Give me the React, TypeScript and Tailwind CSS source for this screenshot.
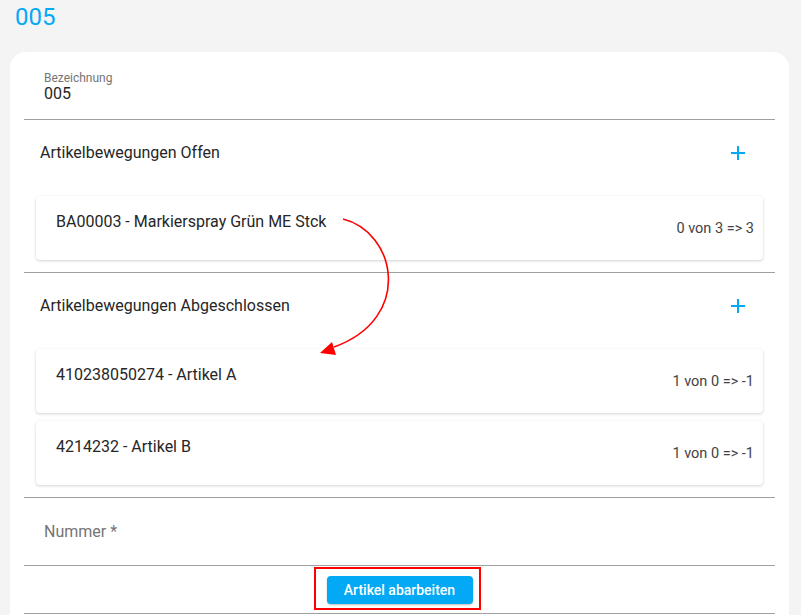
import React from "react";

const Plus = () => (
  <svg width="14" height="14" viewBox="0 0 14 14" className="block">
    <path d="M7 0V14M0 7H14" stroke="#03a9f4" strokeWidth="2" />
  </svg>
);

const Item = ({ title, qty }: { title: string; qty: string }) => (
  <div className="h-[64px] bg-white rounded-[4px] shadow-[0_1px_3px_rgba(0,0,0,0.18)] flex justify-between pl-[20px] pr-[9px]">
    <div className="pt-[16px] text-[16px] leading-[20px] text-[#262626]">{title}</div>
    <div className="self-center pt-[1px] text-[14.5px] leading-[20px] text-[#424242]">{qty}</div>
  </div>
);

const Section = ({ title, children }: { title: string; children: React.ReactNode }) => (
  <div className="border-b border-[#a0a0a0]">
    <div className="h-[64px] flex items-center justify-between pl-[16px] pr-[30px] pt-[1px]">
      <span className="text-[16px] text-[#262626]">{title}</span>
      <Plus />
    </div>
    <div className="flex flex-col gap-[8px] px-[12px] pt-[12px] pb-[12px]">{children}</div>
  </div>
);

export default function App() {
  return (
    <div
      className="relative min-h-[615px] bg-[#f4f4f4] overflow-hidden"
      style={{ fontFamily: "Roboto, 'Noto Sans', sans-serif" }}
    >
      <div className="h-[52px] pl-[15px] pt-[1px] text-[24px] leading-[32px] text-[#03a9f4]">005</div>
      <div className="ml-[10px] mr-[12px] bg-white rounded-t-[16px] px-[14px] pt-[19px] pb-[20px]">
        <div className="border-b border-[#a0a0a0] pl-[20px] pb-[16px]">
          <div className="text-[12px] leading-[14px] text-[#757575]">Bezeichnung</div>
          <div className="text-[16px] leading-[18px] text-[#262626]">005</div>
        </div>
        <Section title="Artikelbewegungen Offen">
          <Item title="BA00003 - Markierspray Grün ME Stck" qty="0 von 3 => 3" />
        </Section>
        <Section title="Artikelbewegungen Abgeschlossen">
          <Item title="410238050274 - Artikel A" qty="1 von 0 => -1" />
          <Item title="4214232 - Artikel B" qty="1 von 0 => -1" />
        </Section>
        <div className="h-[68px] border-b border-[#a0a0a0] flex items-center pl-[20px] text-[16px] text-[#757575]">
          Nummer *
        </div>
        <div className="h-[48px] border-b border-[#a0a0a0] flex justify-center pt-[10px]">
          <div className="relative h-[28px]">
            <button className="h-[28px] w-[146px] rounded-[4px] bg-[#03a9f4] text-white text-[14px] font-medium shadow-[0_1px_2px_rgba(0,0,0,0.25)]">
              Artikel abarbeiten
            </button>
            <div className="absolute -left-[13px] -right-[8px] -top-[9px] -bottom-[6px] border-2 border-[#ff0000]" />
          </div>
        </div>
      </div>
      <svg className="absolute left-0 top-0 pointer-events-none" width="801" height="615">
        <path d="M343 219 C 396 232, 414 318, 334 347" fill="none" stroke="#ff0000" strokeWidth="1.6" />
        <path d="M320 353 L332 342 L336 355 Z" fill="#ff0000" />
      </svg>
    </div>
  );
}
